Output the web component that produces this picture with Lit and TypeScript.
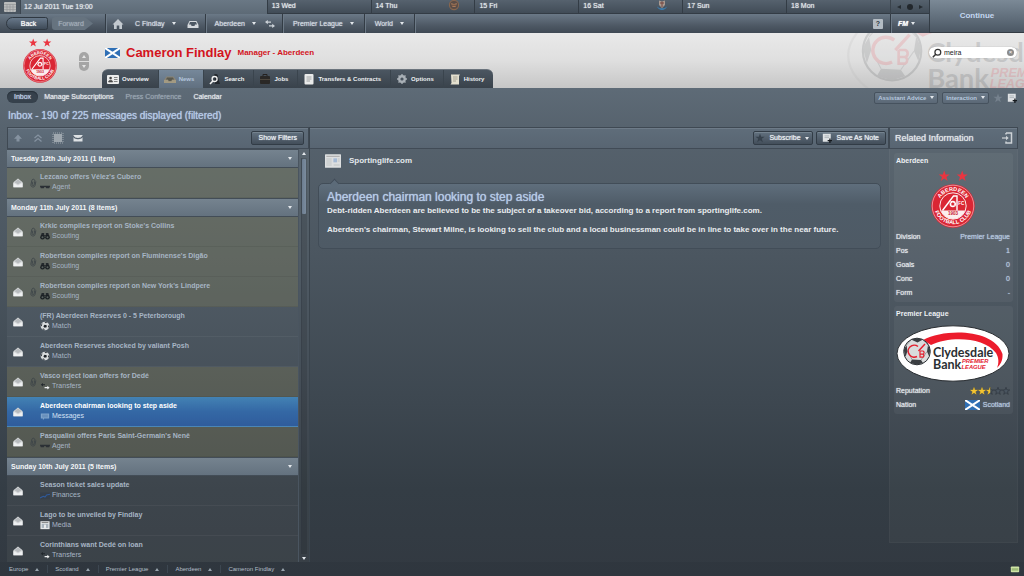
import { LitElement, html, svg, css, nothing } from "lit";
import { customElement, property, state } from "lit/decorators.js";
import { classMap } from "lit/directives/class-map.js";

const STAR = "M6 0.5 7.4 4.4 11.5 4.5 8.2 7 9.4 11 6 8.6 2.6 11 3.8 7 0.5 4.5 4.6 4.4Z";

const icons: Record<string, unknown> = {
  calendar: svg`<rect x="0" y="1" width="12" height="10" rx="1" fill="#b9bbbb"/><path d="M0 3.5H12M3 3.5V11M6 3.5V11M9 3.5V11M0 6H12M0 8.500H12" stroke="#8d9294" stroke-width=".6"/>`,
  home: svg`<path d="M6 1 11.500 6.500H10V11H7.300V7.500H4.700V11H2V6.500H.5Z" fill="#c3c9cf"/>`,
  tray: svg`<path d="M2.500 3H9.500L11.500 7V10H.5V7Z" fill="#d5d9dd"/><path d="M3 4H9L10 6.500H8L7.500 8H4.500L4 6.500H2Z" fill="#4c5763"/>`,
  swap: svg`<path d="M1 4 3.800 2V3.500H7V4.800H3.800V6.200ZM11 8 8.200 5.800V7.200H5V8.500H8.200V10Z" fill="#ccd2d8"/>`,
  card: svg`<rect x="0" y="2" width="12" height="9" rx="1" fill="#eceded"/><circle cx="3.600" cy="5" r="1.300" fill="#444"/><path d="M1.500 9C1.500 6.500 5.700 6.500 5.700 9ZM7 4.500H10.500M7 6.500H10.500M7 8.500H10.500" fill="#444" stroke="#555" stroke-width=".7"/>`,
  news: svg`<path d="M2.500 3.500H9.500L12 7V10H0V7Z" fill="#8b8576"/><path d="M3 4.500H9L10 6.500H8L7.500 8H4.500L4 6.500H2Z" fill="#59594f"/><path d="M0 7H4L4.500 8.500H7.500L8 7H12V10H0Z" fill="#a39a82"/>`,
  search: svg`<path d="M5 1.500C8 0 9.500 2 9 4.500L11 11H6Z" fill="#22272d"/><circle cx="5.600" cy="6" r="2.500" fill="none" stroke="#f2f2f2" stroke-width="1.300"/><path d="M3.800 8 1 11" stroke="#f2f2f2" stroke-width="1.600"/>`,
  jobs: svg`<path d="M4 3.500V1.500H8V3.500" fill="none" stroke="#24211f"/><rect x="1" y="3" width="10" height="8" rx="1" fill="#2a2826"/><path d="M1 6.500H11" stroke="#5b5348" stroke-width=".7"/>`,
  doc: svg`<rect x="1.500" y="1" width="9" height="10.500" rx="1" fill="#e9eaea"/><path d="M3.500 4H8.500M3.500 6H8.500M3.500 8H7" stroke="#8a8f93" stroke-width=".8"/>`,
  gear: svg`<circle cx="6" cy="6" r="2.800" fill="none" stroke="#a9b0b6" stroke-width="2.200"/><path d="M6 1V11M1 6H11M2.500 2.500 9.500 9.500M9.500 2.500 2.500 9.500" stroke="#a9b0b6" stroke-width="1.300"/><circle cx="6" cy="6" r="1.600" fill="#47525d"/>`,
  scroll: svg`<path d="M2 1.500H11L10 3V11.500H1.500L2.500 10Z" fill="#e4e0cf"/><path d="M4 4H8.500M4 6H8.500M4 8H7" stroke="#8f8b7c" stroke-width=".7"/>`,
  up: svg`<path d="M6 2.500 10 6.800H7.500V9.500H4.500V6.800H2Z" fill="#8592a0"/>`,
  upup: svg`<path d="M2.500 6 6 3 9.500 6M2.500 9.500 6 6.500 9.500 9.500" fill="none" stroke="#8592a0" stroke-width="1.300"/>`,
  rows: svg`<rect x="1" y="1" width="10" height="10" fill="none" stroke="#aeb6bd" stroke-width=".8" stroke-dasharray="1 1"/><path d="M2 3H10M2 5H10M2 7H10M2 9H10" stroke="#dfe3e6" stroke-width="1.200"/>`,
  mail: svg`<path d="M1.500 3H10.500V9.500H1.500Z" fill="#dde1e4"/><path d="M1 4C3 7.500 9 7.500 11 4" fill="none" stroke="#56626e" stroke-width="1.100"/>`,
  open: svg`<path d="M.5 5 6 .5 11.500 5V11H.5Z" fill="#d9dbdd"/><path d="M1.800 5 6 1.500 10.200 5 6 7.800Z" fill="#b7bbbe"/><path d="M.5 11V6L6 9 11.500 6V11Z" fill="#eef0f1"/>`,
  clip: svg`<path d="M9 3.500V8.500C9 11.500 4 11.500 4 8.500V3.500C4 .8 7.700 .8 7.700 3.500V8C7.700 9.500 5.500 9.500 5.500 8V4.500" fill="none" stroke="#3a4147" stroke-width=".9" transform="rotate(12 6 6)"/>`,
  agent: svg`<path d="M0 4.500H12V5.500L11 7.500H7.500L6.500 6H5.500L4.500 7.500H1L0 5.500Z" fill="#2b3035"/>`,
  scouting: svg`<path d="M2 2.500H5V5H7V2.500H10L11 6H1Z" fill="#23282c"/><circle cx="3" cy="7.500" r="2.800" fill="#1b2024"/><circle cx="9" cy="7.500" r="2.800" fill="#1b2024"/><circle cx="3" cy="7.500" r="1.200" fill="#5a625f"/><circle cx="9" cy="7.500" r="1.200" fill="#5a625f"/>`,
  match: svg`<circle cx="6" cy="6" r="5.200" fill="#d9dcde"/><path d="M5.500 4.500 8 5 8 7.500 5.500 8 4 6.200ZM1 5 3 2.500 2 6.500ZM5 .9 9 1.800 7 2.800ZM11.200 6 9.500 5 10 8.500ZM2.500 9.500 4.500 9 6 11.200Z" fill="#1d2227"/>`,
  transfers: svg`<path d="M1 4.500 3.500 2.500V3.800H6V5.200H3.500V6.500Z" fill="#20262b"/><path d="M11.500 8 8.800 5.700V7.200H5.500V8.800H8.800V10.300Z" fill="#f0f1f2"/>`,
  messages: svg`<path d="M1 3H11V9H5L3.500 11V9H1Z" fill="#7fa4cb"/><path d="M2.500 5H9.500M2.500 7H9.500" stroke="#4e78ab" stroke-width=".8"/>`,
  finances: svg`<rect x="0" y="3" width="12" height="8" fill="#2f3a47" opacity=".5"/><path d="M0 9.500 4 7.500 6 8.500 8 6 12 5" fill="none" stroke="#2f5a9c" stroke-width="1.300"/>`,
  media: svg`<rect x=".5" y="1.500" width="11" height="9.500" fill="#e6e9ea"/><rect x="2" y="4.500" width="8" height="5" fill="#a9b4bd"/><path d="M2 3H10" stroke="#777"/><rect x="5" y="5.500" width="2" height="4" fill="#f6f6f6"/>`,
  star: svg`<path d=${STAR} fill="#36414c"/>`,
  starDim: svg`<path d=${STAR} fill="#75818d"/>`,
  note: svg`<path d="M1 1H10.500V8L8 10.500H1Z" fill="#dfe2e4"/><path d="M3 3.500H8.500M3 5.500H8.500" stroke="#9aa1a7" stroke-width=".8"/><path d="M9.500 6.500V12M6.800 9.200H12" stroke="#15191d" stroke-width="1.500"/>`,
  dock: svg`<path d="M5 1H10.500V11H5V9.500M5 1V2.500" fill="none" stroke="#cdd2d6" stroke-width="1.500"/><path d="M1 6H6" stroke="#cdd2d6" stroke-width="1.200"/><path d="M5 3.800 7.700 6 5 8.200Z" fill="#cdd2d6"/>`,
  paper: svg`<rect x="0" y="1" width="12" height="10" rx=".4" fill="#dddfe0"/><path d="M1 2.500H11" stroke="#aaa" stroke-width=".8"/><path d="M1 4.500H5M1 6H5M1 7.500H5M1 9H5M6.500 9H11M9.500 4.500H11M9.500 6H11" stroke="#b9bcbe" stroke-width=".6"/><rect x="6.300" y="4" width="2.700" height="3" fill="#a5bad5"/>`,
  badgeOrange: svg`<circle cx="6" cy="6" r="4.600" fill="#5b4d47" stroke="#87664f" stroke-width="1.100"/><path d="M3 4 6 5 9 4 7.500 8H4.500Z" fill="#a8795a"/><path d="M4 6.200H8" stroke="#4b3c35" stroke-width=".8"/>`,
  badgeBlue: svg`<path d="M1 7.500C2.500 12 9.500 12 11 7.500L8.500 9.200H3.500Z" fill="#3c7fb2"/><path d="M3 1.500 6 2.500 9 1.500V6L6 9 3 6Z" fill="#a9998f"/><path d="M6 2.500V8M4 4H8" stroke="#74453f"/>`,
  green: svg`<rect x="1" y="3" width="10" height="7" rx="1" fill="#cfe3a6"/><path d="M2 5H10V8H2Z" fill="#9dba78"/>`,
};

const icon = (name: string, size = "") =>
  html`<svg class="icon ${size}" viewBox="0 0 12 12" aria-hidden="true">${icons[name]}</svg>`;

const saltire = () => html`<svg class="flag" viewBox="0 0 15 10" aria-hidden="true">
  <rect width="15" height="10" fill="#2f6fb5"/><path d="M0 0 15 10M15 0 0 10" stroke="#fff" stroke-width="2"/></svg>`;

@customElement("club-crest")
export class ClubCrest extends LitElement {
  static styles = css`
    :host { display: block; }
    .crest { display: block; width: 100%; }
    .lettering { font-family: "Liberation Sans", Arial, sans-serif; font-weight: 700; }
  `;
  render() {
    return html`<svg class="crest" viewBox="0 0 44 58" role="img" aria-label="Aberdeen crest">
      <defs>
        <path id="top" d="M7 36A15 15 0 0 1 37 36"/>
        <path id="bottom" d="M2.800 35A19.200 19.200 0 0 0 41.200 35"/>
      </defs>
      <g fill="#ea3540" transform="translate(7.200 0)"><path d=${STAR}/><path transform="translate(18 0)" d=${STAR}/></g>
      <circle cx="22" cy="36" r="21.800" fill="#da2634"/>
      <circle cx="22" cy="36" r="20.800" fill="none" stroke="#f3b9bd" stroke-width=".7"/>
      <circle cx="22" cy="36" r="13.200" fill="#da2634" stroke="#fbe9ea" stroke-width="1"/>
      <path d="M9.800 40.500H34.200A13 13 0 0 1 9.800 40.500Z" fill="#fbeeee"/>
      <path d="M11.500 40.500 22.500 26H26V40.500" fill="none" stroke="#fff" stroke-width="1.400"/>
      <circle cx="21.800" cy="34" r="3.200" fill="#fff"/><path d="M21.800 32.500 23.300 33.600 22.700 35.300H20.900L20.300 33.600ZM18.800 33.200 19.800 32M23.800 31.800 24.700 32.800M19.500 36.300 20.300 35.800M24 36.300 23.200 35.800" fill="#da2634" stroke="#da2634" stroke-width=".4"/>
      <g class="lettering" fill="#fff" text-anchor="middle">
        <text font-size="5.500"><textPath href="#top" startOffset="50%">ABERDEEN</textPath></text>
        <text font-size="5.500"><textPath href="#bottom" startOffset="50%">FOOTBALL CLUB</textPath></text>
        <text x="30.300" y="35" font-size="4.500">FC</text>
        <text x="22" y="44.800" font-size="4.500" fill="#c8202e">1903</text>
      </g>
    </svg>`;
  }
}

@customElement("league-logo")
export class LeagueLogo extends LitElement {
  static styles = css`
    :host { display: block; }
    .logo { display: block; width: 100%; }
    .rim { stroke: var(--rim, #2b2f33); fill: var(--plate, #fff); }
    .name { font-family: "Lato", "Liberation Sans", sans-serif; font-weight: 700; }
    .tier { font-family: "Liberation Sans", Arial, sans-serif; font-weight: 700; font-style: italic; }
  `;
  render() {
    return html`<svg class="logo" viewBox="0 0 114 57" role="img" aria-label="Clydesdale Bank Premier League">
      <ellipse class="rim" cx="57" cy="28.500" rx="56" ry="27.700" stroke-width="1"/>
      <path d="M27 15C50 3 98 4 106.500 29C107 36 104 40 101 43C103 38 103 33 100 28C88 12 54 11 35 20Z" fill="#ec1c2c"/>
      <circle cx="21" cy="26.500" r="13.300" fill="#d9dbdc" stroke="#2b2f33"/>
      <path d="M15 14.500 21 13.200 27 14.500 21.500 17.500ZM7.700 25 10.500 20 11.500 26 9.500 32ZM34.300 25 32 20 31 26.500 33 31ZM14 38 16 34.500 25 35 27 38 21 39.800Z" fill="#3a3e42"/>
      <path d="M10.500 20 15 15M11.500 26 16 34.500M31 26.500 25 35M27 14.500 32 20" stroke="#55595c" stroke-width=".5"/>
      <path d="M22 21.500A6 6 0 1 0 21 31.500M29 19 22.500 26" fill="none" stroke="#e4202f" stroke-width="1.500"/>
      <path d="M24 26H27A1.700 1.700 0 0 1 27 29.200H24M27 29.200A1.700 1.700 0 0 1 27 32.200H24V26" fill="none" stroke="#e4202f" stroke-width="1.200"/>
      <text class="name" x="37" y="31.500" font-size="12.500" fill="#2b2f33">Clydesdale</text>
      <text class="name" x="37" y="43.500" font-size="12.500" fill="#2b2f33">Bank</text>
      <g class="tier" fill="#e4202f" font-size="5.800"><text x="66" y="38.300">PREMIER</text><text x="65.500" y="43.500">LEAGUE</text></g>
    </svg>`;
  }
}

interface Mail { title: string; kind: string; icon: string; clip?: boolean; }
interface Group { label: string; items: Mail[]; }

const GROUPS: Group[] = [
  { label: "Tuesday 12th July 2011 (1 item)", items: [
    { title: "Lezcano offers Vélez's Cubero", kind: "Agent", icon: "agent", clip: true },
  ] },
  { label: "Monday 11th July 2011 (8 items)", items: [
    { title: "Krkic compiles report on Stoke's Collins", kind: "Scouting", icon: "scouting", clip: true },
    { title: "Robertson compiles report on Fluminense's Digão", kind: "Scouting", icon: "scouting", clip: true },
    { title: "Robertson compiles report on New York's Lindpere", kind: "Scouting", icon: "scouting", clip: true },
    { title: "(FR) Aberdeen Reserves 0 - 5 Peterborough", kind: "Match", icon: "match" },
    { title: "Aberdeen Reserves shocked by valiant Posh", kind: "Match", icon: "match" },
    { title: "Vasco reject loan offers for Dedé", kind: "Transfers", icon: "transfers", clip: true },
    { title: "Aberdeen chairman looking to step aside", kind: "Messages", icon: "messages" },
    { title: "Pasqualini offers Paris Saint-Germain's Nenê", kind: "Agent", icon: "agent", clip: true },
  ] },
  { label: "Sunday 10th July 2011 (5 items)", items: [
    { title: "Season ticket sales update", kind: "Finances", icon: "finances" },
    { title: "Lago to be unveiled by Findlay", kind: "Media", icon: "media" },
    { title: "Corinthians want Dedé on loan", kind: "Transfers", icon: "transfers" },
  ] },
];

const DAYS = [
  { n: "13", d: "Wed" }, { n: "14", d: "Thu", badge: "badgeOrange" }, { n: "15", d: "Fri" },
  { n: "16", d: "Sat", badge: "badgeBlue" }, { n: "17", d: "Sun" }, { n: "18", d: "Mon" },
];

const TABS = [
  ["Overview", "card"], ["News", "news"], ["Search", "search"], ["Jobs", "jobs"],
  ["Transfers & Contracts", "doc"], ["Options", "gear"], ["History", "scroll"],
];

@customElement("app-root")
export class AppRoot extends LitElement {
  @property() query = "meira";
  @state() private selected = "Aberdeen chairman looking to step aside";

  static styles = css`
    :host {
      display: flex; flex-direction: column; height: 100vh; overflow: hidden;
      font: 7px/10px "Liberation Sans", Arial, sans-serif; color: #e4e8ec;
      background: linear-gradient(#5e6b77 15%, #56626d 23%, #4c5761 43%, #3d4750 70%, #343d45 85%, #323941);
    }
    *, *::before, *::after { box-sizing: border-box; }
    button { font: inherit; color: inherit; background: none; border: 0; padding: 0; margin: 0; text-align: left; text-shadow: inherit; }
    a { color: inherit; text-decoration: none; }
    ul { list-style: none; margin: 0; padding: 0; }
    h1, h2, h3, p { margin: 0; font: inherit; }
    .icon { width: 12px; height: 12px; flex: none; display: block; }
    .icon.small { width: 10px; height: 10px; }
    .icon.large { width: 16px; height: 16px; }
    .flag { width: 15px; height: 10px; display: block; flex: none; }
    .caret { width: 0; height: 0; border: 2px solid transparent; border-top: 3px solid #e4e8ec; border-bottom: 0; flex: none; }
    .caret.rise { border-top: 0; border-bottom: 3px solid #98a3ad; }

    .top { display: flex; height: 33px; flex: none; border-bottom: 1px solid #343b43; }
    .bars { flex: 1; display: flex; flex-direction: column; min-width: 0; }
    .calendar { display: grid; grid-template-columns: 20px minmax(0, 247fr) repeat(6, minmax(0, 104fr)) 39px; height: 14px; background: linear-gradient(#56626e, #414c57); border-bottom: 1px solid #333c45; text-shadow: 0 0 1px currentColor; }
    .cal-icon { display: grid; place-items: center; background: #4a5560; }
    .today { padding: 2px 3px; background: linear-gradient(#6a7885, #5d6a76); border-left: 1px solid #3c4650; }
    .day { display: flex; justify-content: space-between; padding: 1px 14px 0 4px; border-left: 1px solid #333c45; }
    .day .icon { margin-top: -2px; }
    .pager { display: flex; align-items: center; justify-content: space-evenly; border-left: 1px solid #3a434c; }
    .pager-dot { width: 6px; height: 6px; border-radius: 3px; background: #22272c; }
    .pager-arrow { border: 2px solid transparent; border-right: 4px solid #262c32; border-left: 0; }
    .pager-arrow.next { border-left: 4px solid #262c32; border-right: 0; }
    .nav { flex: 1; display: flex; align-items: stretch; background: linear-gradient(#6b7987, #4e5965 60%, #3f4954); text-shadow: 0 0 1px currentColor; color: #d3dae1; }
    .history { width: 105px; display: flex; padding: 3px 6px; gap: 4px; }
    .back, .forward { height: 13px; line-height: 13px; text-align: center; }
    .back { width: 42px; padding-left: 3px; background: linear-gradient(#68788a, #3e4a57); color: #fff; border: 1px solid #2f3841; line-height: 12px; border-radius: 8px 3px 3px 8px; }
    .forward { width: 41px; padding-right: 3px; background: #66737f; color: #a0abb6; clip-path: polygon(0 0, 80% 0, 100% 50%, 80% 100%, 0 100%); border-radius: 3px; }
    .menu { display: flex; align-items: center; gap: 8px; padding: 0 6px 0 9px; border-left: 1px solid #333c45; box-shadow: inset 1px 0 #6c7986; }
    .menu button { display: flex; align-items: center; gap: 7px; }
    .menu.manager { padding: 0 6px; gap: 11px; }
    .menu.short { padding: 0 10px; }
    .nav-rest { flex: 1; display: flex; justify-content: flex-end; align-items: center; padding-right: 7px; border-left: 1px solid #333c45; box-shadow: inset 1px 0 #6c7986; }
    .nav .help { width: 10px; height: 10px; background: #b4bcc4; color: #2f3841; text-align: center; font-weight: 700; border-radius: 1px; text-shadow: none; }
    .fm { width: 39px; padding: 0 7px; font-weight: 700; font-style: italic; gap: 3px; color: #fff; }
    .continue { width: 95px; flex: none; border-left: 1px solid #333c45; background: linear-gradient(#7b8996, #5f6c79 60%, #4b5763); color: #c4d7f0; font-weight: 700; font-size: 8px; text-align: center; }

    .banner { position: relative; flex: none; display: flex; height: 55px; overflow: hidden; background: linear-gradient(#e9e9e9, #dfdfdf 50%, #c6c6c6); }
    .crest-box { width: 79px; padding: 5px 0 0 23px; flex: none; }
    .crest-box club-crest { width: 34px; }
    .stepper { width: 10px; height: 19px; margin-top: 19px; display: flex; flex-direction: column; gap: 1px; flex: none; }
    .stepper button { flex: 1; background: #a5a5a5; border-radius: 5px 5px 0 0; display: grid; place-items: center; }
    .stepper button:last-child { border-radius: 0 0 5px 5px; }
    .stepper .caret { border-top-color: #e5e5e5; }
    .stepper .rise { border-bottom-color: #e5e5e5; }
    .identity { flex: 1; display: flex; flex-direction: column; justify-content: space-between; padding: 11px 0 0 13px; position: relative; z-index: 1; }
    .who { display: flex; align-items: center; gap: 6px; padding-left: 3px; color: #d3141d; font-weight: 700; }
    .who h1 { font-size: 13px; line-height: 17px; }
    .role { font-size: 8px; line-height: 12px; padding-top: 1px; }
    .tabs { display: flex; align-self: flex-start; height: 19px; background: linear-gradient(#4b5661, #39424b); border-radius: 6px 6px 0 0; border-top: 1px solid #6b747d; overflow: hidden; font-size: 6px; font-weight: 700; }
    .tab { display: flex; align-items: center; gap: 3px; padding: 0 9px 0 5px; border-right: 1px solid #3a444d; color: #eef1f3; }
    .tab:last-child { border-right: 0; }
    .tab.active { background: linear-gradient(#76889a, #617080); color: #b3c5dc; }
    .watermark { position: absolute; right: -72px; top: -40px; width: 250px; opacity: .14; --rim: #aaa; --plate: none; }
    .search { position: absolute; z-index: 2; right: 7px; top: 14px; width: 88px; height: 11px; display: flex; align-items: center; gap: 2px; padding: 0 3px; background: #fff; border-radius: 6px; box-shadow: 0 0 1px #888; }
    .search input { flex: 1; min-width: 0; border: 0; outline: 0; padding: 0; background: none; font: inherit; color: #222; }
    .clear { width: 7px; height: 7px; border-radius: 4px; background: #8b8b8b; color: #fff; font-size: 6px; line-height: 7px; text-align: center; }

    .subnav { flex: none; display: flex; align-items: center; height: 18px; padding: 0 7px; text-shadow: 0 0 1px currentColor; }
    .links { flex: 1; display: flex; align-items: center; gap: 12px; }
    .pill { background: #36414c; border-radius: 7px; line-height: 12px; padding: 0 7px; margin-right: -6px; color: #c0d2ea; box-shadow: inset 0 1px 1px #252e37; }
    .muted { color: #98a4b0; }
    .tools { display: flex; align-items: center; gap: 4px; padding-top: 1px; }
    .mini { display: flex; align-items: center; gap: 4px; height: 12px; padding: 0 3px; border: 1px solid #46525e; border-radius: 2px; background: linear-gradient(#6d7c8b, #5b6876); color: #b7c9df; font-size: 6px; font-weight: 700; text-shadow: none; }
    .page-title { flex: none; height: 21px; padding: 3px 8px 0; font-size: 10px; line-height: 14px; color: #b7cbe8; text-shadow: 0 0 1px currentColor; }

    .panels { flex: 1; min-height: 0; display: grid; grid-template-columns: 303px minmax(0, 1fr) 129px; padding: 0 6px 0 7px; }
    .bar { display: flex; align-items: center; height: 22px; flex: none; background: linear-gradient(#5f6d7a, #586572); border: 1px solid #3f4953; border-bottom-color: #414b56; box-shadow: inset 0 1px #6e7b88; }
    .inbox { display: flex; flex-direction: column; min-height: 0; border-right: 1px solid #3a444d; }
    .filters { gap: 8px; padding: 0 4px; }
    .filters .push { margin-left: auto; }
    .btn { display: flex; align-items: center; height: 14px; padding: 0 6px; border: 1px solid #323c46; border-radius: 2px; background: linear-gradient(#62717f, #434e5a); box-shadow: inset 0 1px #75838f; color: #eef2f6; text-shadow: 0 0 1px currentColor; }
    .scroller { flex: 1; min-height: 0; display: flex; background: #ffffff08; }
    .list { flex: 1; min-width: 0; overflow: hidden; }
    .group { display: flex; justify-content: space-between; align-items: center; width: 100%; height: 19px; padding: 0 6px 0 4px; background: linear-gradient(#75838f, #64727f); border: solid #434d57; border-width: 1px 0; font-weight: 700; color: #f4f6f8; }
    .mail { display: grid; grid-template-columns: 11px 10px 1fr; column-gap: 4px; align-items: center; width: 100%; height: 30px; padding: 0 6px 2px 6px; border-bottom: 1px solid #ffffff0c; background: #ffffff04; color: #a7b5c4; }
    .mail.tinted { background: #85825a50; border-bottom-color: #00000010; }
    .mail.active { background: linear-gradient(#4382b4, #3468a5 50%, #2f5c9c); color: #d3e2f5; }
    .mail .icon { margin-top: 3px; }
    .mail > span { margin-left: -2px; }
    .subject { display: block; font-weight: 700; }
    .mail.active .subject { color: #fff; }
    .kind { display: flex; align-items: center; gap: 2px; }
    .mail .kind .icon { margin-top: 0; }
    .scrollbar { width: 11px; display: flex; flex-direction: column; align-items: center; padding: 3px 0 2px; gap: 3px; border-left: 1px solid #4a5560; }
    .track { flex: 1; width: 6px; background: #0000001c; border-radius: 1px; box-shadow: inset 1px 0 #2f384166; padding: 1px; }
    .thumb { width: 4px; height: 14%; background: linear-gradient(90deg, #6c7d90, #7b8c9e); border-radius: 1px; }
    .caret.light { border-bottom-color: #e4e8ec; }

    .reader { display: flex; flex-direction: column; min-width: 0; }
    .reader .bar { justify-content: flex-end; gap: 3px; padding: 0 2px; border-left: 0; }
    .btn.with-icon { gap: 4px; padding: 0 3px 0 1px; }
    .btn.wide { gap: 5px; padding: 0 6px 0 5px; }
    .source { display: flex; align-items: center; gap: 8px; padding: 4px 15px 0; font-size: 8px; font-weight: 700; }
    .article { position: relative; margin: 14px 8px 0 8px; padding: 6px 8px 12px; border: 1px solid #424d58; border-radius: 5px; background: linear-gradient(#5f6e7c, #4f5c68 20px, #4e5a65); }
    .article::before { content: ""; position: absolute; left: 12px; top: -4px; width: 7px; height: 7px; transform: rotate(45deg); background: #5c6b79; border: solid #424d58; border-width: 1px 0 0 1px; }
    .article h2 { font-size: 12px; line-height: 15px; color: #b7cbe8; text-shadow: 0 0 1px currentColor; }
    .article p { font-size: 8px; line-height: 12px; font-weight: 700; color: #e9ecef; }
    .article p + p { margin-top: 7px; }

    .related { display: flex; flex-direction: column; }
    .related .bar { justify-content: space-between; padding: 0 4px 0 5px; font-size: 9px; text-shadow: 0 0 1px currentColor; }
    .info { flex: 1; margin-bottom: 19px; padding: 4px; background: #ffffff08; display: flex; flex-direction: column; gap: 4px; border: 1px solid #ffffff08; border-top: 0; }
    .card { background: #ffffff0c; border-radius: 3px; padding: 2px 3px 2px 2px; }
    .card h3 { font-weight: 700; color: #eef1f4; line-height: 11px; }
    .card club-crest { width: 44px; margin: 4px auto 0; }
    .card league-logo { width: 114px; margin: 6px 0 0; }
    table { width: 100%; margin-top: 2px; border-collapse: collapse; text-shadow: 0 0 1px currentColor; }
    th, td { padding: 2px 0; font-weight: 400; text-align: left; height: 14px; }
    td { text-align: right; color: #b7c9e0; }
    .nation, .rating { display: flex; justify-content: flex-end; gap: 3px; }
    .rating { gap: 0; }
    .rating svg { width: 8px; height: 8px; }

    .crumbs { flex: none; height: 14px; display: flex; align-items: center; justify-content: space-between; padding: 0 4px 0 9px; font-size: 6px; color: #b3bec9; background: #29313840; }
    .crumbs ul { display: flex; }
    .crumbs button { display: flex; align-items: center; gap: 7px; padding: 0 8px 0 7px; border-right: 1px solid #3d4751; line-height: 8px; }
    .crumbs li:first-child button { padding-left: 0; }
    .crumbs li:last-child button { border: 0; }
  `;

  private mail(m: Mail) {
    return html`<li><button
      class=${classMap({ mail: true, tinted: !!m.clip, active: m.title === this.selected })}
      @click=${() => { this.selected = m.title; }}>
      ${icon("open", "small")}
      ${m.clip ? icon("clip", "small") : html`<i></i>`}
      <span><span class="subject">${m.title}</span><span class="kind">${icon(m.icon, "small")}${m.kind}</span></span>
    </button></li>`;
  }

  private rating() {
    return [1, 1, 0.5, 0, 0].map((v) => html`<svg viewBox="0 0 12 12" aria-hidden="true">
      <path d=${STAR} fill="#4b5661" stroke="#2b333b" stroke-width=".9"/>
      ${v ? svg`<path d=${v === 1 ? STAR : "M6 0.5V8.6L2.6 11 3.8 7 0.5 4.5 4.6 4.4Z"} fill="#f5c531" stroke="#f5c531" stroke-width=".6"/>` : nothing}
    </svg>`);
  }

  render() {
    return html`
      <header class="top">
        <div class="bars">
          <div class="calendar">
            <button class="cal-icon" aria-label="Calendar">${icon("calendar")}</button>
            <div class="today">12 Jul 2011 Tue 19:00</div>
            ${DAYS.map((d) => html`<div class="day"><span>${d.n} ${d.d}</span>${d.badge ? icon(d.badge) : nothing}</div>`)}
            <div class="pager">
              <button class="pager-arrow" aria-label="Previous"></button>
              <button class="pager-dot" aria-label="Today"></button>
              <button class="pager-arrow next" aria-label="Next"></button>
            </div>
          </div>
          <nav class="nav">
            <div class="history"><button class="back">Back</button><button class="forward">Forward</button></div>
            <div class="menu manager">
              <button aria-label="Home">${icon("home")}</button>
              <button>C Findlay <span class="caret"></span></button>
              <button aria-label="Inbox">${icon("tray")}</button>
            </div>
            <div class="menu"><button>Aberdeen <span class="caret"></span></button><button aria-label="Switch">${icon("swap")}</button></div>
            <div class="menu short"><button>Premier League <span class="caret"></span></button></div>
            <div class="menu short"><button>World <span class="caret"></span></button></div>
            <div class="nav-rest"><button class="help">?</button></div>
            <button class="menu fm">FM <span class="caret"></span></button>
          </nav>
        </div>
        <button class="continue">Continue</button>
      </header>

      <section class="banner">
        <league-logo class="watermark"></league-logo>
        <div class="crest-box"><club-crest></club-crest></div>
        <div class="stepper">
          <button aria-label="Previous manager"><span class="caret rise"></span></button>
          <button aria-label="Next manager"><span class="caret"></span></button>
        </div>
        <div class="identity">
          <div class="who">${saltire()}<h1>Cameron Findlay</h1><span class="role">Manager - Aberdeen</span></div>
          <nav class="tabs">
            ${TABS.map(([label, ic]) => html`<a href="#" class=${classMap({ tab: true, active: label === "News" })}>${icon(ic)}${label}</a>`)}
          </nav>
        </div>
        <label class="search">
          <svg class="icon small" viewBox="0 0 12 12" aria-hidden="true"><circle cx="7" cy="5" r="3.500" fill="none" stroke="#333" stroke-width="1.500"/><path d="M4.500 7.500 1 11" stroke="#333" stroke-width="1.800"/></svg>
          <input type="text" aria-label="Search" .value=${this.query}>
          <button class="clear" aria-label="Clear search">×</button>
        </label>
      </section>

      <div class="subnav">
        <nav class="links">
          <a class="pill" href="#">Inbox</a><a href="#">Manage Subscriptions</a>
          <a class="muted" href="#">Press Conference</a><a href="#">Calendar</a>
        </nav>
        <div class="tools">
          <button class="mini">Assistant Advice <span class="caret"></span></button>
          <button class="mini">Interaction <span class="caret"></span></button>
          <button aria-label="Bookmark">${icon("starDim", "small")}</button>
          <button aria-label="Add note">${icon("note", "small")}</button>
        </div>
      </div>
      <h2 class="page-title">Inbox - 190 of 225 messages displayed (filtered)</h2>

      <main class="panels">
        <section class="inbox">
          <div class="bar filters">
            <button aria-label="Up">${icon("up")}</button>
            <button aria-label="First">${icon("upup")}</button>
            <button aria-label="Group">${icon("rows")}</button>
            <button aria-label="Unread">${icon("mail")}</button>
            <button class="btn push">Show Filters</button>
          </div>
          <div class="scroller">
            <div class="list">
              ${GROUPS.map((g) => html`<button class="group">${g.label}<span class="caret"></span></button>
                <ul>${g.items.map((m) => this.mail(m))}</ul>`)}
            </div>
            <div class="scrollbar" aria-hidden="true">
              <span class="caret rise light"></span><div class="track"><div class="thumb"></div></div><span class="caret"></span>
            </div>
          </div>
        </section>

        <section class="reader">
          <div class="bar">
            <button class="btn with-icon">${icon("star", "small")}Subscribe <span class="caret"></span></button>
            <button class="btn wide">${icon("note", "small")}Save As Note</button>
          </div>
          <div class="source">${icon("paper", "large")}Sportinglife.com</div>
          <article class="article">
            <h2>Aberdeen chairman looking to step aside</h2>
            <p>Debt-ridden Aberdeen are believed to be the subject of a takeover bid, according to a report from sportinglife.com.</p>
            <p>Aberdeen's chairman, Stewart Milne, is looking to sell the club and a local businessman could be in line to take over in the near future.</p>
          </article>
        </section>

        <aside class="related">
          <div class="bar"><h2>Related Information</h2><button aria-label="Dock panel">${icon("dock")}</button></div>
          <div class="info">
            <div class="card">
              <h3>Aberdeen</h3><club-crest></club-crest>
              <table>
                <tr><th scope="row">Division</th><td>Premier League</td></tr>
                <tr><th scope="row">Pos</th><td>1</td></tr>
                <tr><th scope="row">Goals</th><td>0</td></tr>
                <tr><th scope="row">Conc</th><td>0</td></tr>
                <tr><th scope="row">Form</th><td>-</td></tr>
              </table>
            </div>
            <div class="card">
              <h3>Premier League</h3><league-logo></league-logo>
              <table>
                <tr><th scope="row">Reputation</th><td><span class="rating">${this.rating()}</span></td></tr>
                <tr><th scope="row">Nation</th><td><span class="nation">${saltire()}Scotland</span></td></tr>
              </table>
            </div>
          </div>
        </aside>
      </main>

      <footer class="crumbs">
        <ul>${["Europe", "Scotland", "Premier League", "Aberdeen", "Cameron Findlay"].map((c) =>
          html`<li><button>${c}<span class="caret rise"></span></button></li>`)}</ul>
        ${icon("green", "small")}
      </footer>
    `;
  }
}
